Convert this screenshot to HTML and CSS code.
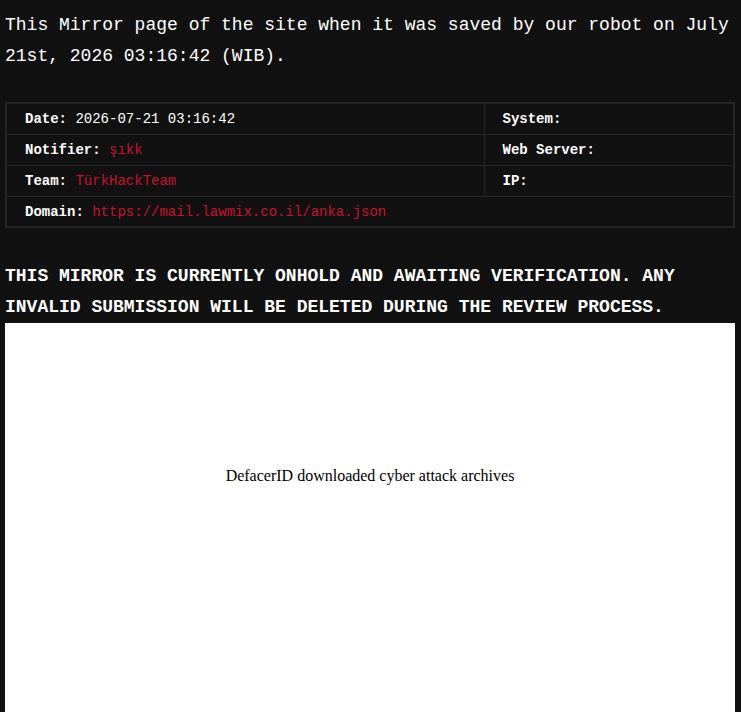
FILE: index.html
```html
<!DOCTYPE html>
<html lang="en">
<head>
  <meta charset="UTF-8" />
  <meta name="viewport" content="width=device-width, initial-scale=1.0"/>
  <title>Mirror - mail.lawmix.co.il</title>
  <link rel="stylesheet" href="styles.css">
</head>
<body>
  <div class="page">
    <p class="intro">This Mirror page of the site when it was saved by our robot on July 21st, 2026 03:16:42 (WIB).</p>

    <table class="info">
      <tr>
        <td class="col-left"><b>Date:</b> 2026-07-21 03:16:42</td>
        <td class="col-right"><b>System:</b></td>
      </tr>
      <tr>
        <td><b>Notifier:</b> <span class="red">şıkk</span></td>
        <td><b>Web Server:</b></td>
      </tr>
      <tr>
        <td><b>Team:</b> <span class="red">TürkHackTeam</span></td>
        <td><b>IP:</b></td>
      </tr>
      <tr>
        <td colspan="2"><b>Domain:</b> <span class="red">https://mail.lawmix.co.il/anka.json</span></td>
      </tr>
    </table>

    <h2 class="notice">THIS MIRROR IS CURRENTLY ONHOLD AND AWAITING VERIFICATION. ANY INVALID SUBMISSION WILL BE DELETED DURING THE REVIEW PROCESS.</h2>

    <div class="mirror">
      <div class="mirror-text">DefacerID downloaded cyber attack archives</div>
    </div>
  </div>
</body>
</html>
```

FILE: styles.css
```css
* {
    box-sizing: border-box;
    margin: 0;
    padding: 0;
}
body {
    background: #111111;
    color: #ffffff;
    font-family: 'Liberation Mono', 'DejaVu Sans Mono', monospace;
}

.page {
    padding: 10px 6px 0 5px;
}

.intro {
    font-size: 18px;
    line-height: 31px;
    margin-bottom: 30px;
}

.info {
    width: 100%;
    border-collapse: collapse;
    border: 2px solid #252525;
    font-size: 14px;
}

.info td {
    border: 1px solid #252525;
    height: 31px;
    padding: 1px 18px 0;
    vertical-align: middle;
}

.info .col-left {
    width: 478px;
}

.info b {
    font-weight: bold;
}

.red {
    color: #c8102e;
}

.notice {
    font-size: 18px;
    font-weight: bold;
    line-height: 31px;
    margin-top: 33px;
}

.mirror {
    background: #ffffff;
    height: 420px;
    display: flex;
    justify-content: center;
    padding-top: 144px;
}

.mirror-text {
    font-family: 'Liberation Serif', serif;
    font-size: 16px;
    color: #000000;
}
```
